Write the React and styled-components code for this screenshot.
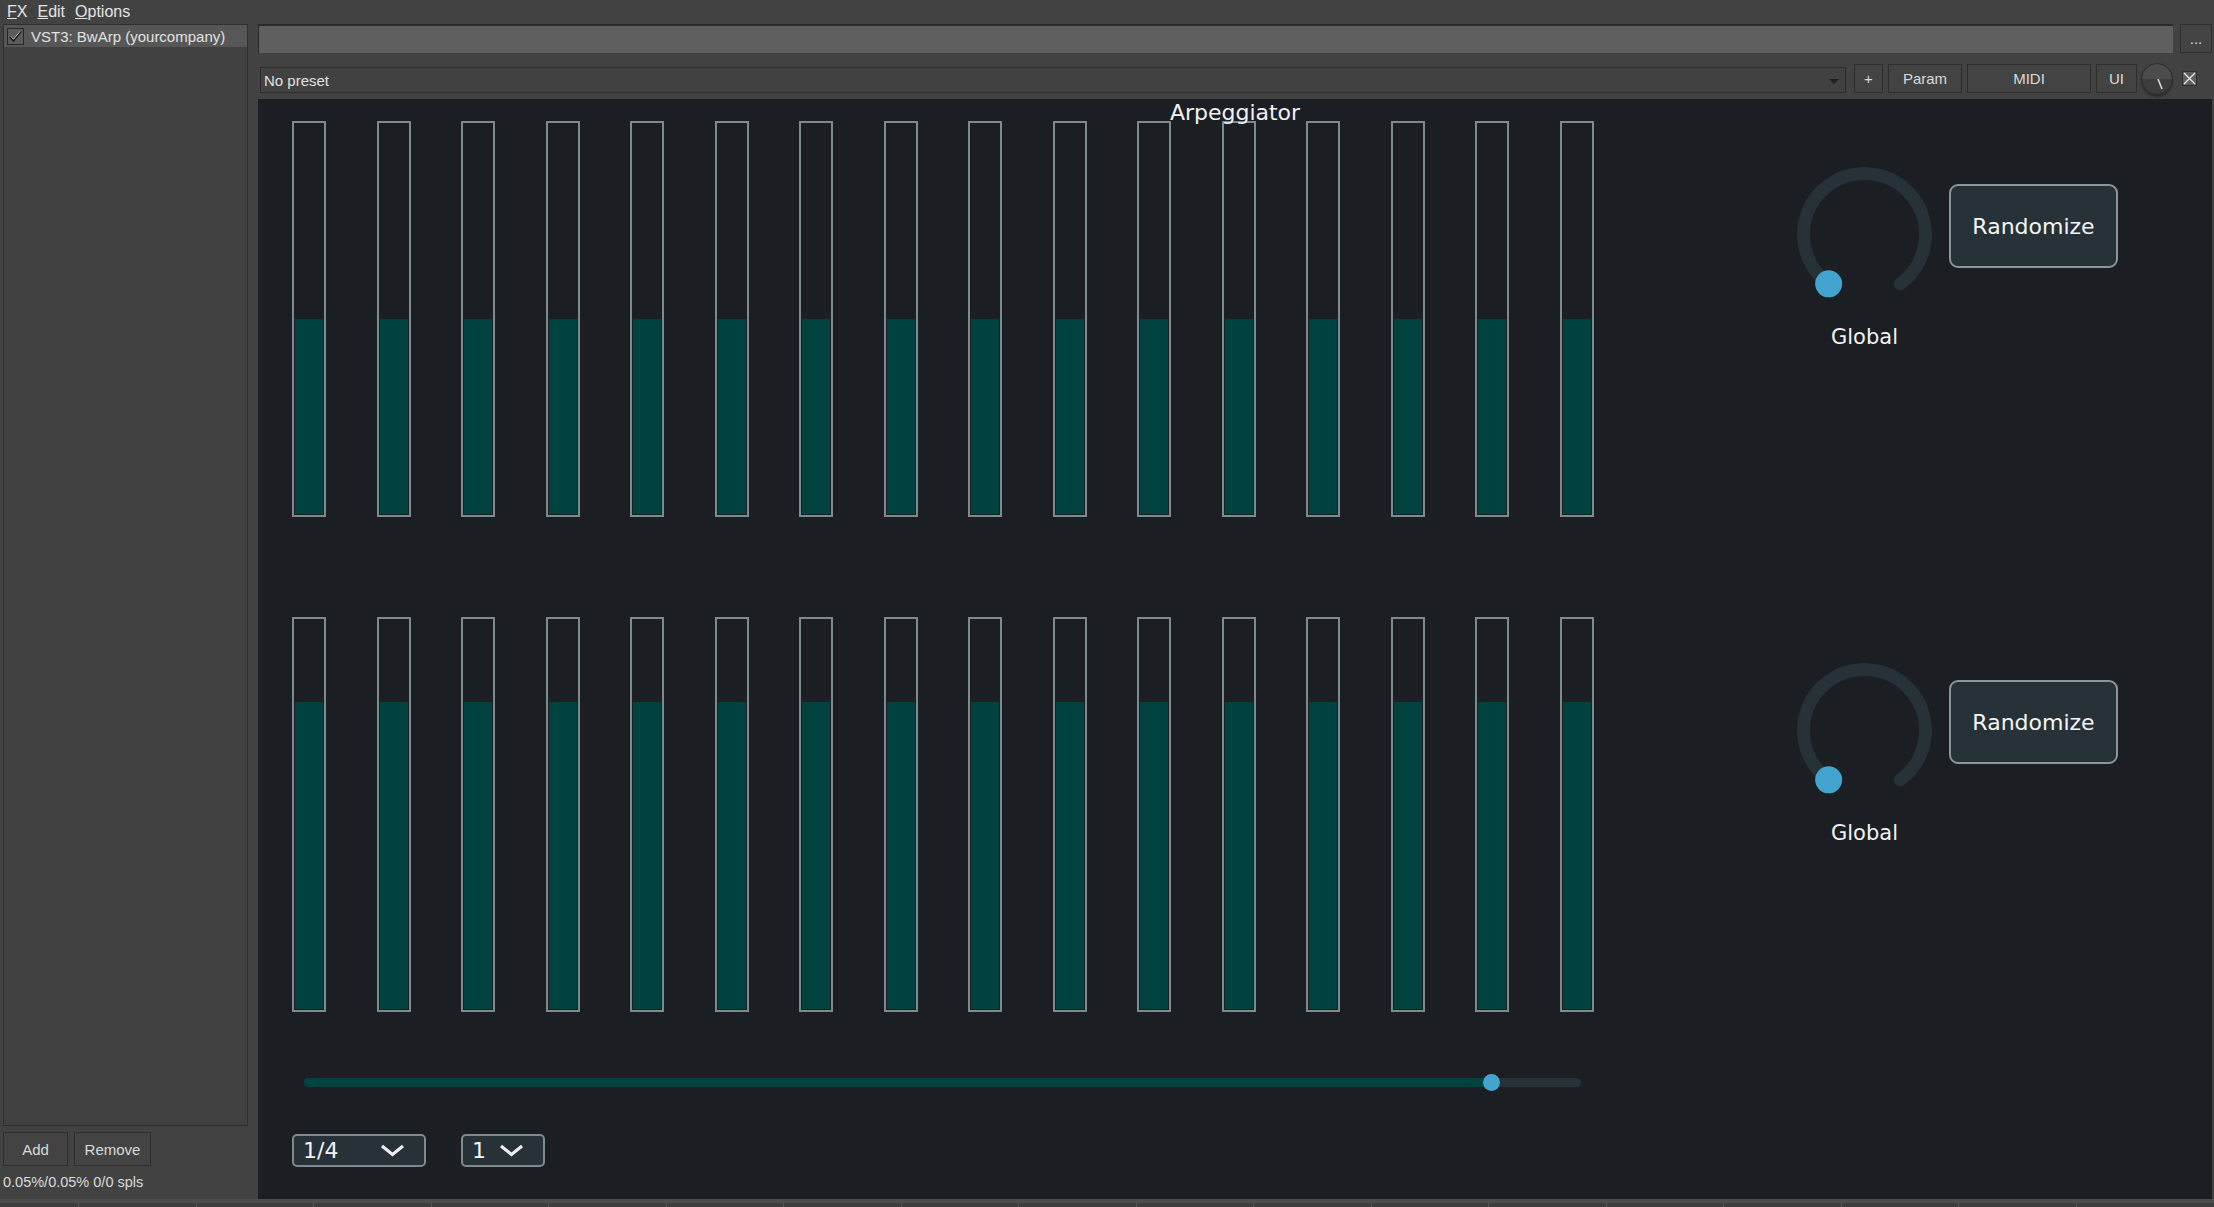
import React from 'react';
import styled, { createGlobalStyle } from 'styled-components';

const GlobalStyle = createGlobalStyle`
  html, body {
    margin: 0;
    padding: 0;
    background: #424242;
    overflow: hidden;
  }
  * { box-sizing: border-box; }
`;

const HOST_FONT = `"Liberation Sans", Arial, sans-serif`;
const PLUGIN_FONT = `"DejaVu Sans", Verdana, sans-serif`;

const Window = styled.div`
  width: 2214px;
  height: 1207px;
  display: flex;
  flex-direction: column;
  background: #424242;
  font-family: ${HOST_FONT};
  color: #dcdcdc;
`;

const MenuBar = styled.div`
  height: 24px;
  display: flex;
  align-items: center;
  gap: 10px;
  padding-left: 7px;
  font-size: 16px;
  line-height: 24px;
  color: #e4e4e4;
`;

const Body = styled.div`
  flex: 1;
  display: flex;
  min-height: 0;
`;

const LeftColumn = styled.div`
  width: 258px;
  padding: 0 10px 0 3px;
  display: flex;
  flex-direction: column;
`;

const FxList = styled.div`
  flex: 1;
  border: 1px solid #2f2f2f;
  border-bottom-color: #2c2c2c;
  background: #414141;
`;

const FxItem = styled.div`
  height: 22px;
  display: flex;
  align-items: center;
  gap: 7px;
  padding-left: 3px;
  background: ${({ selected }) => (selected ? '#575757' : 'transparent')};
  font-size: 15px;
  color: #e2e2e2;
`;

const CheckBox = styled.div`
  width: 17px;
  height: 17px;
  border: 1px solid #262626;
  background: #5b5b5b;
  display: flex;
  align-items: center;
  justify-content: center;
`;

const ButtonRow = styled.div`
  display: flex;
  gap: 6px;
  margin-top: 6px;
`;

const HostButton = styled.button`
  height: ${({ h }) => h || 34}px;
  width: ${({ w }) => (w ? `${w}px` : 'auto')};
  padding: 0;
  border: 1px solid #2d2d2d;
  background: #434343;
  color: #dadada;
  font-family: ${HOST_FONT};
  font-size: 15px;
  display: flex;
  align-items: center;
  justify-content: center;
`;

const StatusText = styled.div`
  height: 33px;
  line-height: 33px;
  font-size: 14.5px;
  color: #dadada;
  white-space: nowrap;
`;

const RightColumn = styled.div`
  flex: 1;
  display: flex;
  flex-direction: column;
  padding-right: 2px;
  min-width: 0;
`;

const TopRow = styled.div`
  height: 29px;
  display: flex;
  gap: 7px;
`;

const NameField = styled.div`
  flex: 1;
  background: #5f5f5f;
  border-top: 2px solid #2a2a2a;
  border-left: 1px solid #2a2a2a;
`;

const PresetRow = styled.div`
  height: 29px;
  margin-top: 11px;
  display: flex;
  align-items: center;
  gap: 5px;
  padding-right: 15px;
`;

const PresetCombo = styled.div`
  flex: 1;
  height: 26px;
  margin: 3px 3px 0 2px;
  border: 1px solid #2c2c2c;
  background: #414141;
  display: flex;
  align-items: center;
  justify-content: space-between;
  padding: 0 6px 0 3px;
  font-size: 15px;
  color: #e0e0e0;
`;

const ComboArrow = styled.div`
  width: 0;
  height: 0;
  border-left: 5px solid transparent;
  border-right: 5px solid transparent;
  border-top: 5px solid #1f1f1f;
  margin-top: 2px;
`;

const MiniKnob = styled.div`
  width: 32px;
  height: 32px;
  margin-left: -1px;
  border-radius: 50%;
  border: 1px solid #2a2a2a;
  background: linear-gradient(#4c4c4c 0 50%, #3d3d3d 50% 100%);
  box-shadow: 0 2px 2px rgba(0, 0, 0, 0.35);
  display: flex;
  align-items: center;
  justify-content: center;
`;

const CloseBox = styled.div`
  width: 15px;
  height: 15px;
  margin-left: 4px;
  background: #5e5e5e;
  border: 1px solid #2e2e2e;
  display: flex;
  align-items: center;
  justify-content: center;
`;

const PluginPanel = styled.div`
  flex: 1;
  margin-top: 6px;
  background: #1b1e22;
  padding-left: 34px;
  display: flex;
  flex-direction: column;
  font-family: ${PLUGIN_FONT};
  color: #f2f2f2;
  min-height: 0;
`;

const Title = styled.div`
  height: 25px;
  margin-left: -34px;
  padding-top: 3px;
  margin-bottom: -3px;
  text-align: center;
  font-size: 22px;
  line-height: 22px;
  position: relative;
  z-index: 1;
`;

const StepRow = styled.div`
  display: flex;
  height: ${({ h }) => h}px;
  margin-bottom: ${({ gapBelow }) => gapBelow || 0}px;
`;

const BarGrid = styled.div`
  display: grid;
  grid-template-columns: repeat(16, 34px);
  column-gap: 50.5px;
  height: 100%;
`;

const StepBar = styled.div`
  border: 2px solid #7e8a8c;
  padding: 1px;
  display: flex;
  flex-direction: column;
  justify-content: flex-end;
  background: #1b1e22;
`;

const StepFill = styled.div`
  background: #00423f;
`;

const SideControls = styled.div`
  display: flex;
  align-items: flex-start;
  margin-left: 203.5px;
`;

const KnobGroup = styled.div`
  margin-top: 46px;
  width: 135px;
  display: flex;
  flex-direction: column;
  align-items: center;
`;

const KnobLabel = styled.div`
  margin-top: 22px;
  font-size: 21px;
  line-height: 26px;
`;

const RandomizeButton = styled.button`
  margin-top: 63px;
  margin-left: 17px;
  width: 169px;
  height: 84px;
  border-radius: 9px;
  border: 2px solid #8a9698;
  background: #263238;
  color: #f4f4f4;
  font-family: ${PLUGIN_FONT};
  font-size: 22px;
  padding: 0;
`;

const SliderTrack = styled.div`
  margin: 65.5px 0 0 12px;
  width: 1277px;
  height: 9px;
  border-radius: 5px;
  background: #263238;
  position: relative;
`;

const SliderFill = styled.div`
  height: 100%;
  border-radius: 5px 0 0 5px;
  background: #00423f;
`;

const SliderThumb = styled.div`
  position: absolute;
  top: 50%;
  width: 17px;
  height: 17px;
  margin: -8.5px 0 0 -8.5px;
  border-radius: 50%;
  background: #43a5cf;
`;

const DropRow = styled.div`
  display: flex;
  gap: 35px;
  margin-top: 47px;
`;

const DropBox = styled.div`
  width: ${({ w }) => w}px;
  height: 33px;
  border: 2px solid #7e8a8c;
  border-radius: 5px;
  background: #263238;
  display: flex;
  align-items: center;
  justify-content: space-between;
  padding: 0 19px 0 9px;
  font-size: 22px;
  color: #f4f4f4;
`;

const BottomStrip = styled.div`
  height: 8px;
  border-top: 4px solid #4c4c4c;
  background: #3d3d3d;
  display: flex;
  padding-left: 78px;
`;

const StripCell = styled.div`
  width: 117.5px;
  border-left: 1px solid #5a5a5a;
`;

const Knob = () => {
  const cx = 67.5;
  const r = 61;
  const a0 = (216 * Math.PI) / 180;
  const a1 = (144 * Math.PI) / 180;
  const sx = cx + r * Math.sin(a0);
  const sy = cx - r * Math.cos(a0);
  const ex = cx + r * Math.sin(a1);
  const ey = cx - r * Math.cos(a1);
  return (
    <svg width="135" height="135" viewBox="0 0 135 135">
      <path
        d={`M ${sx} ${sy} A ${r} ${r} 0 1 1 ${ex} ${ey}`}
        fill="none"
        stroke="#263238"
        strokeWidth="13"
        strokeLinecap="round"
      />
      <circle cx={sx} cy={sy} r="13.5" fill="#43a5cf" />
    </svg>
  );
};

const Chevron = () => (
  <svg width="25" height="13" viewBox="0 0 25 13">
    <polyline points="2,2 12.5,10.5 23,2" fill="none" stroke="#ededed" strokeWidth="3.2" strokeLinejoin="miter" />
  </svg>
);

const Row = ({ value, height, gapBelow }) => (
  <StepRow h={height} gapBelow={gapBelow}>
    <BarGrid>
      {Array.from({ length: 16 }).map((_, i) => (
        <StepBar key={i}>
          <StepFill style={{ height: `${value * 100}%` }} />
        </StepBar>
      ))}
    </BarGrid>
    <SideControls>
      <KnobGroup>
        <Knob />
        <KnobLabel>Global</KnobLabel>
      </KnobGroup>
      <RandomizeButton>Randomize</RandomizeButton>
    </SideControls>
  </StepRow>
);

const App = () => {
  const sliderValue = 0.93;
  return (
    <Window>
      <GlobalStyle />
      <MenuBar>
        <span><u>F</u>X</span>
        <span><u>E</u>dit</span>
        <span><u>O</u>ptions</span>
      </MenuBar>
      <Body>
        <LeftColumn>
          <FxList>
            <FxItem selected>
              <CheckBox>
                <svg width="13" height="12" viewBox="0 0 13 12">
                  <path d="M1 6.5 L4.5 10.5 L12 1" fill="none" stroke="#111" strokeWidth="2" />
                  <path d="M1.5 6 L4.5 9.3 L11.5 0.8" fill="none" stroke="#f0f0f0" strokeWidth="0.8" />
                </svg>
              </CheckBox>
              VST3: BwArp (yourcompany)
            </FxItem>
          </FxList>
          <ButtonRow>
            <HostButton w={65}>Add</HostButton>
            <HostButton w={77}>Remove</HostButton>
          </ButtonRow>
          <StatusText>0.05%/0.05% 0/0 spls</StatusText>
        </LeftColumn>
        <RightColumn>
          <TopRow>
            <NameField />
            <HostButton w={32} h={29}>...</HostButton>
          </TopRow>
          <PresetRow>
            <PresetCombo>
              <span>No preset</span>
              <ComboArrow />
            </PresetCombo>
            <HostButton w={29} h={29}>+</HostButton>
            <HostButton w={74} h={29}>Param</HostButton>
            <HostButton w={124} h={29}>MIDI</HostButton>
            <HostButton w={41} h={29}>UI</HostButton>
            <MiniKnob>
              <svg width="30" height="30" viewBox="0 0 30 30">
                <line x1="16" y1="15" x2="20" y2="25" stroke="#d8d8d8" strokeWidth="1.6" />
              </svg>
            </MiniKnob>
            <CloseBox>
              <svg width="13" height="13" viewBox="0 0 13 13">
                <path d="M1 1 L12 12 M12 1 L1 12" stroke="#eaeaea" strokeWidth="1.3" />
              </svg>
            </CloseBox>
          </PresetRow>
          <PluginPanel>
            <Title>Arpeggiator</Title>
            <Row value={0.5} height={396} gapBelow={100} />
            <Row value={0.79} height={395} />
            <SliderTrack>
              <SliderFill style={{ width: `${sliderValue * 100}%` }} />
              <SliderThumb style={{ left: `${sliderValue * 100}%` }} />
            </SliderTrack>
            <DropRow>
              <DropBox w={134}>
                <span>1/4</span>
                <Chevron />
              </DropBox>
              <DropBox w={84}>
                <span>1</span>
                <Chevron />
              </DropBox>
            </DropRow>
          </PluginPanel>
        </RightColumn>
      </Body>
      <BottomStrip>
        {Array.from({ length: 18 }).map((_, i) => (
          <StripCell key={i} />
        ))}
      </BottomStrip>
    </Window>
  );
};

export default App;
